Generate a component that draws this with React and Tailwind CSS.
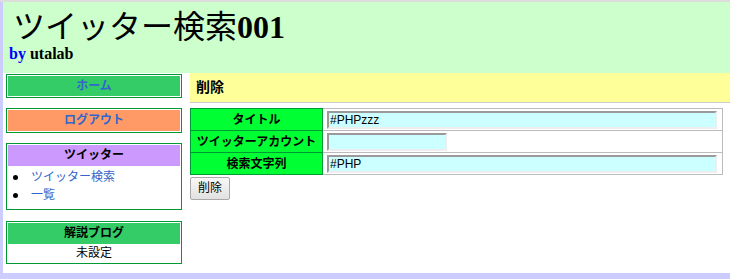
import React from 'react';

const sans = { fontFamily: '"Liberation Sans", "Noto Sans CJK JP", sans-serif' };
const serif = { fontFamily: '"Liberation Serif", "Noto Sans CJK JP", serif' };

function SideButton({ label, fill, tall }) {
  return (
    <div className="border border-[#009933] bg-white p-[1px]">
      <div className={`${fill} ${tall ? 'leading-[21px]' : 'leading-[20px]'} text-center text-[12px] font-bold text-[#3366cc]`}>
        {label}
      </div>
    </div>
  );
}

function Field({ label, value, wide }) {
  return (
    <tr>
      <td className="h-[22px] w-[132px] border border-[#009933] bg-[#00ff33] p-0 text-center text-[12px] font-bold text-black">
        {label}
      </td>
      <td className="border border-[#bbbbbb] py-0 pl-[4px] pr-0">
        <input
          readOnly
          value={value}
          className={`${wide ? 'w-[390px]' : 'w-[120px]'} block h-[18px] border-2 border-b-[#eeeeee] border-l-[#9a9a9a] border-r-[#eeeeee] border-t-[#9a9a9a] bg-[#ccffff] px-[1px] text-[12px] leading-[14px] text-black outline-none`}
        />
      </td>
    </tr>
  );
}

function Bullet({ children }) {
  return (
    <li className="flex items-center">
      <span className="ml-[5px] h-[5px] w-[5px] rounded-full bg-black" />
      <span className="ml-[13px] text-[#3366cc]">{children}</span>
    </li>
  );
}

export default function App() {
  return (
    <div className="h-[279px] w-[730px] overflow-hidden border-t-2 border-[#dddddd] bg-[#ccccff]" style={sans}>
      <div className="ml-[3px] flex h-[271px] flex-col bg-white">
        <header className="h-[71px] bg-[#ccffcc] px-[6px]">
          <h1 className="pl-[4px] pt-[7px] text-[32px] font-normal leading-[36px] text-black" style={serif}>
            ツイッター検索<span className="font-bold">001</span>
          </h1>
          <p className="text-[16px] font-bold leading-[18px] text-black" style={serif}>
            <span className="text-[#0000ff]">by</span> utalab
          </p>
        </header>

        <div className="flex">
          <aside className="ml-[3px] mt-[1px] flex w-[176px] flex-col">
            <SideButton label="ホーム" fill="bg-[#33cc66]" />
            <div className="mt-[10px]">
              <SideButton label="ログアウト" fill="bg-[#ff9966]" tall />
            </div>
            <div className="mt-[10px] border border-[#009933] bg-white p-[1px]">
              <div className="bg-[#cc99ff] text-center text-[12px] font-bold leading-[21px] text-black">ツイッター</div>
              <ul className="mt-[2px] pb-[4px] text-[12px] leading-[18px]">
                <Bullet>ツイッター検索</Bullet>
                <Bullet>一覧</Bullet>
              </ul>
            </div>
            <div className="mt-[11px] border border-[#009933] bg-white p-[1px]">
              <div className="bg-[#33cc66] text-center text-[12px] font-bold leading-[21px] text-black">解説ブログ</div>
              <div className="text-center text-[12px] leading-[18px] text-black">未設定</div>
            </div>
          </aside>

          <main className="ml-[8px] flex-1">
            <div className="h-[30px] border-b border-[#cccccc] bg-[#ffff99] pl-[6px] text-[14px] font-bold leading-[29px] text-black">
              削除
            </div>
            <table className="mt-[5px] w-[533px] border-collapse">
              <tbody>
                <Field label="タイトル" value="#PHPzzz" wide />
                <Field label="ツイッターアカウント" value="" />
                <Field label="検索文字列" value="#PHP" wide />
              </tbody>
            </table>
            <button
              type="button"
              className="mt-[1px] h-[23px] w-[40px] rounded-[2px] border border-[#a9a9a9] bg-gradient-to-b from-[#f8f8f8] to-[#e1e1e1] text-[12px] text-black"
            >
              削除
            </button>
          </main>
        </div>
      </div>
    </div>
  );
}
